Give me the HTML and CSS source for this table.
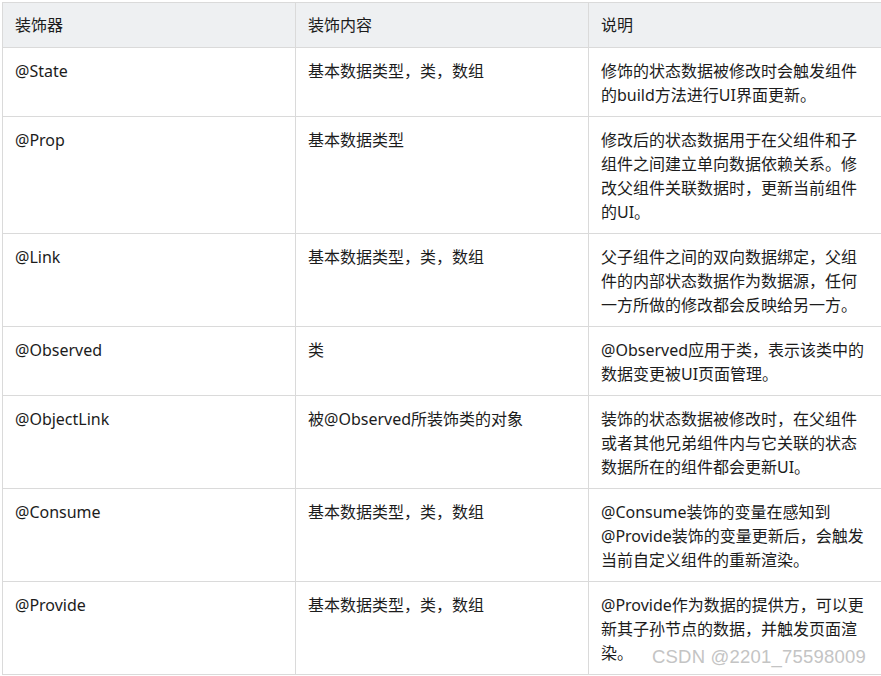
FILE: index.html
```html
<!DOCTYPE html>
<html lang="zh">
<head>
<meta charset="utf-8">
<link rel="stylesheet" href="styles.css">
</head>
<body>
<div class="page">
<table class="deco">
<colgroup><col class="c"><col class="c"><col class="c"></colgroup>
<thead>
<tr><th>装饰器</th><th>装饰内容</th><th>说明</th></tr>
</thead>
<tbody>
<tr><td>@State</td><td>基本数据类型，类，数组</td><td>修饰的状态数据被修改时会触发组件的build方法进行UI界面更新。</td></tr>
<tr><td>@Prop</td><td>基本数据类型</td><td>修改后的状态数据用于在父组件和子组件之间建立单向数据依赖关系。修改父组件关联数据时，更新当前组件的UI。</td></tr>
<tr><td>@Link</td><td>基本数据类型，类，数组</td><td>父子组件之间的双向数据绑定，父组件的内部状态数据作为数据源，任何一方所做的修改都会反映给另一方。</td></tr>
<tr><td>@Observed</td><td>类</td><td>@Observed应用于类，表示该类中的数据变更被UI页面管理。</td></tr>
<tr><td>@ObjectLink</td><td>被@Observed所装饰类的对象</td><td>装饰的状态数据被修改时，在父组件或者其他兄弟组件内与它关联的状态数据所在的组件都会更新UI。</td></tr>
<tr><td>@Consume</td><td>基本数据类型，类，数组</td><td>@Consume装饰的变量在感知到@Provide装饰的变量更新后，会触发当前自定义组件的重新渲染。</td></tr>
<tr><td>@Provide</td><td>基本数据类型，类，数组</td><td>@Provide作为数据的提供方，可以更新其子孙节点的数据，并触发页面渲染。</td></tr>
</tbody>
</table>
<div class="watermark">CSDN @2201_75598009</div>
</div>
</body>
</html>
```
FILE: styles.css
```css
html, body {
  margin: 0;
  padding: 0;
  background: #ffffff;
}
.page {
  position: relative;
  width: 881px;
  height: 676px;
  overflow: hidden;
  padding: 2px 0 0 2px;
  box-sizing: border-box;
}
.deco {
  border-collapse: collapse;
  table-layout: fixed;
  width: 880px;
  font-family: "Noto Sans", "Noto Sans CJK SC", sans-serif;
  font-size: 16px;
  line-height: 24px;
  color: #1c1c1c;
}
.c {
  width: 293px;
}
.deco th, .deco td {
  border: 1px solid #dadada;
  padding: 11px 12px 9px;
  text-align: left;
  vertical-align: top;
}
.deco th {
  padding: 10px 12px;
  background: #eef0f2;
  font-weight: 400;
}
.watermark {
  position: absolute;
  left: 652px;
  top: 645px;
  font-family: "Liberation Sans", "Noto Sans", sans-serif;
  font-size: 18.5px;
  line-height: 24px;
  color: #c4c4c4;
  letter-spacing: 0.2px;
}
```
